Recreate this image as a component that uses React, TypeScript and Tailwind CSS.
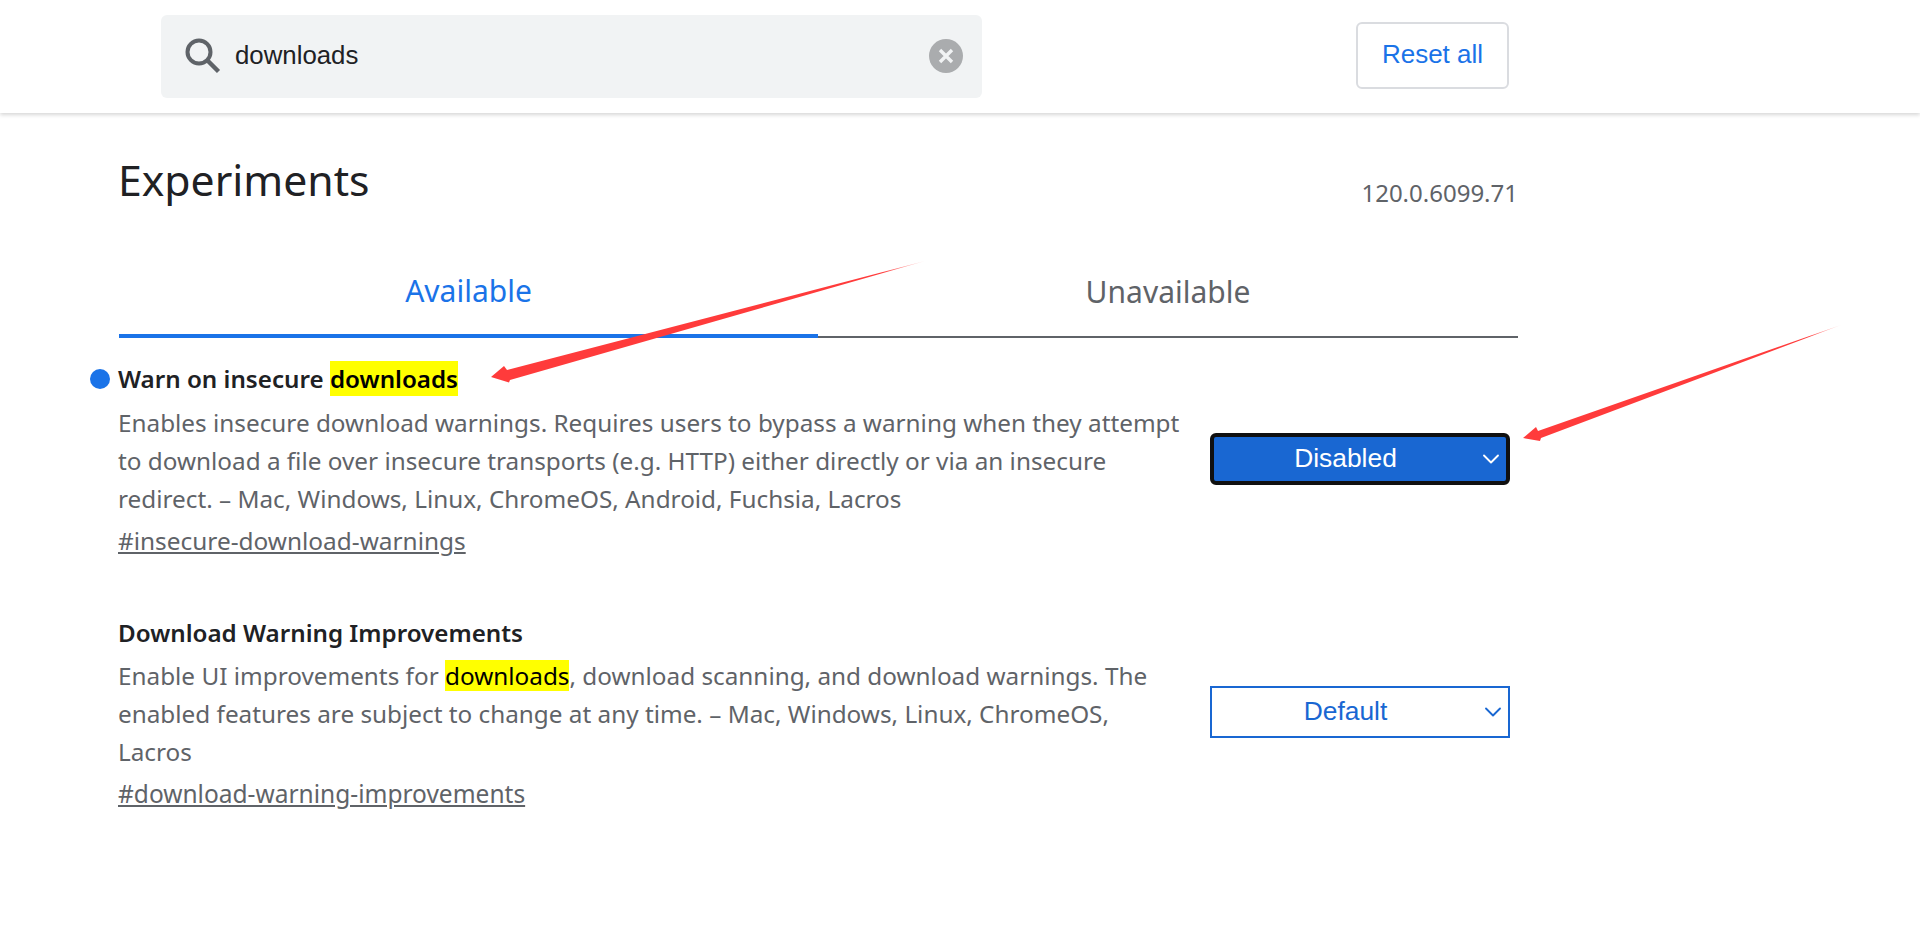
import { ChevronDown } from 'lucide-react';

const uiFont = { fontFamily: '"Noto Sans", sans-serif' };

function Highlight({ children, tall }: { children: string; tall?: boolean }) {
  return (
    <span className={tall ? 'inline-block h-[35px] bg-[#ffff00] leading-[35px] text-black' : 'inline-block h-[31px] bg-[#ffff00] leading-[31px] text-black'}>
      {children}
    </span>
  );
}

function FlagSelect({ label, active }: { label: string; active?: boolean }) {
  return (
    <div
      className={
        active
          ? 'flex h-[52px] w-[300px] items-center rounded-[6px] border-[4px] border-[#101010] bg-[#1967d2] text-white'
          : 'flex h-[52px] w-[300px] items-center border-2 border-[#1967d2] bg-white text-[#1967d2]'
      }
    >
      <span className="flex-1 pl-[6px] pr-[6px] text-center font-['Liberation_Sans',sans-serif] text-[26.4px]">{label}</span>
      <ChevronDown className="mr-[1px] h-[28px] w-[28px] shrink-0" strokeWidth={1.6} />
    </div>
  );
}

export default function App() {
  return (
    <div className="relative h-[930px] overflow-hidden bg-white" style={uiFont}>
      {/* Header */}
      <header className="flex h-[113px] items-center bg-white pl-[161px] shadow-[0_2px_4px_rgba(0,0,0,0.16)]">
        <div className="mb-[1px] flex h-[83px] w-[821px] items-center rounded-[6px] bg-[#f1f3f4] pl-[24px] pr-[19px]">
          <svg width="36" height="36" viewBox="0 0 36 36" fill="none" stroke="#5f6368" className="shrink-0">
            <circle cx="14" cy="14" r="11.5" strokeWidth="4" />
            <path d="M22.5 22.5 L33.5 33.5" strokeWidth="4.4" />
          </svg>
          <span className="mb-[2px] ml-[14px] flex-1 font-['Liberation_Sans',sans-serif] text-[25.8px] text-[#202124]">downloads</span>
          <svg width="34" height="34" viewBox="0 0 34 34" className="shrink-0">
            <circle cx="17" cy="17" r="17" fill="#aaacae" />
            <path d="M11 11 L23 23 M23 11 L11 23" stroke="#f1f3f4" strokeWidth="3.4" />
          </svg>
        </div>
        <button className="mb-[3px] ml-[374px] h-[67px] w-[153px] rounded-[6px] border-2 border-[#dadce0] bg-white pb-[2px] font-['Liberation_Sans',sans-serif] text-[26px] text-[#1a73e8]">
          Reset all
        </button>
      </header>

      <main className="w-[1518px] pl-[119px] pt-[39px]">
        {/* Title */}
        <div className="flex h-[56px] items-start justify-between">
          <h1 className="-ml-[1px] text-[42.7px] leading-[56px] text-[#202124]">Experiments</h1>
          <span className="mt-[25px] text-[24px] leading-[32px] text-[#5f6368]">120.0.6099.71</span>
        </div>

        {/* Tabs */}
        <div className="mt-[42px] flex h-[88px]">
          <div className="flex w-[699px] items-center justify-center border-b-4 border-[#1a73e8] pb-[4px] text-[30px] text-[#1a73e8]">Available</div>
          <div className="flex flex-1 items-center justify-center border-b-2 border-[#5f6368] pb-[4px] text-[30px] text-[#5f6368]">Unavailable</div>
        </div>

        {/* Flags */}
        <section className="relative mt-[23px] flex justify-between pr-[8px]">
          <span className="absolute -left-[29px] top-[8px] h-[20px] w-[20px] rounded-full bg-[#1a73e8]" />
          <div>
            <h2 className="-ml-[1px] h-[35px] text-[24.2px] font-semibold leading-[35px] text-[#202124]">
              Warn on insecure <Highlight tall>downloads</Highlight>
            </h2>
            <p className="-ml-[1px] mt-[8px] text-[24.3px] leading-[38px] text-[#5f6368]">
              Enables insecure download warnings. Requires users to bypass a warning when they attempt
              <br />
              to download a file over insecure transports (e.g. HTTP) either directly or via an insecure
              <br />
              redirect. – Mac, Windows, Linux, ChromeOS, Android, Fuchsia, Lacros
            </p>
            <a className="-ml-[1px] mt-[4px] block text-[24.4px] leading-[38px] text-[#5f6368] underline">#insecure-download-warnings</a>
          </div>
          <div className="mt-[72px]">
            <FlagSelect label="Disabled" active />
          </div>
        </section>

        <section className="mt-[55px] flex justify-between pr-[8px]">
          <div>
            <h2 className="-ml-[1px] h-[36px] text-[24.2px] font-semibold leading-[36px] text-[#202124]">Download Warning Improvements</h2>
            <p className="-ml-[1px] mt-[6px] text-[24.3px] leading-[38px] text-[#5f6368]">
              Enable UI improvements for <Highlight>downloads</Highlight>, download scanning, and download warnings. The
              <br />
              enabled features are subject to change at any time. – Mac, Windows, Linux, ChromeOS,
              <br />
              Lacros
            </p>
            <a className="-ml-[1px] mt-[4px] block text-[24.5px] leading-[38px] text-[#5f6368] underline">#download-warning-improvements</a>
          </div>
          <div className="mt-[71px]">
            <FlagSelect label="Default" />
          </div>
        </section>
      </main>

      {/* Red annotation arrows on top of the page */}
      <svg className="pointer-events-none absolute inset-0" width="1920" height="930" viewBox="0 0 1920 930">
        <defs>
          <linearGradient id="arrowA" gradientUnits="userSpaceOnUse" x1="925" y1="261" x2="491" y2="377">
            <stop offset="0" stopColor="#ff3b3b" stopOpacity="0.2" />
            <stop offset="0.1" stopColor="#ff3b3b" />
            <stop offset="1" stopColor="#ff3b3b" />
          </linearGradient>
          <linearGradient id="arrowB" gradientUnits="userSpaceOnUse" x1="1841" y1="325" x2="1523" y2="438">
            <stop offset="0" stopColor="#ff3b3b" stopOpacity="0.2" />
            <stop offset="0.1" stopColor="#ff3b3b" />
            <stop offset="1" stopColor="#ff3b3b" />
          </linearGradient>
        </defs>
        <polygon points="491,377 504,366 507,370 925,261 510,380 509,382.5" fill="url(#arrowA)" />
        <polygon points="1523,438 1536,427 1538,431 1841,325 1541,438 1540,441" fill="url(#arrowB)" />
      </svg>
    </div>
  );
}
